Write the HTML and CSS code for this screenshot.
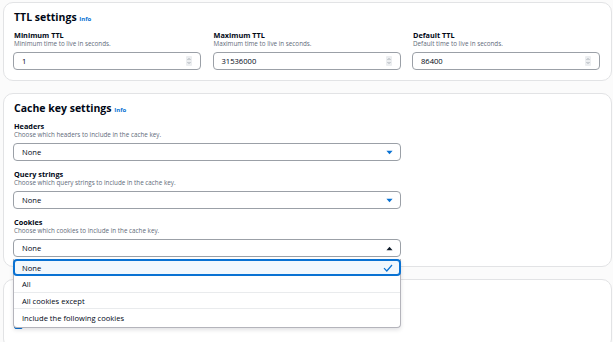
FILE: index.html
```html
<!DOCTYPE html>
<html>
<head>
  <meta name="viewport" content="width=device-width, initial-scale=1.0">
  <link rel="stylesheet" href="styles.css">
</head>
<body>
  <div class="page">
    <section class="card card-ttl">
      <h2 class="card-title">TTL settings <a class="info">Info</a></h2>
      <div class="ttl-grid">
        <div class="field">
          <div class="label">Minimum TTL</div>
          <div class="desc">Minimum time to live in seconds.</div>
          <div class="input">
            <span class="value">1</span>
            <span class="spinner">
              <svg viewBox="0 0 6 10" width="6" height="10"><path d="M1.5 4 L3 2.5 L4.5 4 M1.5 6 L3 7.5 L4.5 6" fill="none" stroke="#8d939c" stroke-width="0.7"/></svg>
            </span>
          </div>
        </div>
        <div class="field">
          <div class="label">Maximum TTL</div>
          <div class="desc">Maximum time to live in seconds.</div>
          <div class="input">
            <span class="value">31536000</span>
            <span class="spinner">
              <svg viewBox="0 0 6 10" width="6" height="10"><path d="M1.5 4 L3 2.5 L4.5 4 M1.5 6 L3 7.5 L4.5 6" fill="none" stroke="#8d939c" stroke-width="0.7"/></svg>
            </span>
          </div>
        </div>
        <div class="field">
          <div class="label">Default TTL</div>
          <div class="desc">Default time to live in seconds.</div>
          <div class="input">
            <span class="value">86400</span>
            <span class="spinner">
              <svg viewBox="0 0 6 10" width="6" height="10"><path d="M1.5 4 L3 2.5 L4.5 4 M1.5 6 L3 7.5 L4.5 6" fill="none" stroke="#8d939c" stroke-width="0.7"/></svg>
            </span>
          </div>
        </div>
      </div>
    </section>

    <section class="card">
      <h2 class="card-title">Cache key settings <a class="info">Info</a></h2>
      <div class="fields">
        <div class="field">
          <div class="label">Headers</div>
          <div class="desc">Choose which headers to include in the cache key.</div>
          <div class="select">
            <span class="value">None</span>
            <svg class="caret" viewBox="0 0 8 5" width="7" height="5"><path d="M0.5 0.5 H7.5 L4 4.5 Z" fill="#0972d3"/></svg>
          </div>
        </div>
        <div class="field">
          <div class="label">Query strings</div>
          <div class="desc">Choose which query strings to include in the cache key.</div>
          <div class="select">
            <span class="value">None</span>
            <svg class="caret" viewBox="0 0 8 5" width="7" height="5"><path d="M0.5 0.5 H7.5 L4 4.5 Z" fill="#0972d3"/></svg>
          </div>
        </div>
        <div class="field">
          <div class="label">Cookies</div>
          <div class="desc">Choose which cookies to include in the cache key.</div>
          <div class="select-wrap">
            <div class="select">
              <span class="value">None</span>
              <svg class="caret" viewBox="0 0 8 5" width="7" height="5"><path d="M0.5 4.5 H7.5 L4 0.5 Z" fill="#0f1b2a"/></svg>
            </div>
            <ul class="dropdown">
              <li class="option selected">
                <span>None</span>
                <svg viewBox="0 0 10 8" width="10" height="8"><path d="M1 4.2 L3.8 7 L9 1" fill="none" stroke="#0972d3" stroke-width="1.2"/></svg>
              </li>
              <li class="option">All</li>
              <li class="option">All cookies except</li>
              <li class="option">Include the following cookies</li>
            </ul>
          </div>
        </div>
      </div>
    </section>

    <section class="card card-last">
      <div class="check-row">
        <span class="checkbox"></span>
      </div>
    </section>
  </div>
</body>
</html>
```

FILE: styles.css
```css
* {
  margin: 0;
  padding: 0;
  box-sizing: border-box;
}

body {
  margin: 0;
  padding: 2px 1px 0 3px;
  background: #fbfbfb;
  font-family: "Open Sans", "Liberation Sans", sans-serif;
  color: #000716;
  overflow: hidden;
}

.page {
  display: flex;
  flex-direction: column;
  gap: 12px;
}

.card {
  background: #fff;
  border: 1px solid #e2e3e5;
  border-radius: 10px;
  padding: 8px 11px 9px 9px;
}

.card-ttl {
  padding-bottom: 10px;
}

.card-title {
  font-size: 10.5px;
  line-height: 13px;
  height: 13px;
  font-weight: 700;
  padding-left: 1px;
  margin-bottom: 7px;
}

.info {
  color: #0972d3;
  font-size: 6px;
  line-height: 1;
  font-weight: 700;
}

.ttl-grid {
  display: grid;
  grid-template-columns: 1fr 1fr 1fr;
  column-gap: 11.5px;
}

.fields {
  display: flex;
  flex-direction: column;
  gap: 9px;
}

.label {
  font-size: 7.3px;
  line-height: 9px;
  font-weight: 700;
  padding-left: 1px;
}

.desc {
  font-size: 6.3px;
  line-height: 8px;
  color: #5f6b7a;
  padding-left: 1px;
}

.input,
.select {
  margin-top: 4px;
  height: 18px;
  border: 1px solid #9ba0a7;
  border-radius: 4px;
  background: #fff;
  display: flex;
  align-items: center;
  justify-content: space-between;
  padding: 0 8px 0 8px;
  font-size: 7.6px;
}

.spinner {
  width: 6px;
  height: 10px;
  background: #eceef0;
  border-radius: 1px;
  display: flex;
}

.select-wrap {
  position: relative;
  max-width: 388px;
}

.select {
  max-width: 388px;
  padding-right: 7px;
}

.dropdown {
  list-style: none;
  position: absolute;
  top: calc(100% + 2px);
  left: 0;
  right: 0;
  background: #fff;
  border: 1px solid #b4b4bb;
  border-top: none;
  border-radius: 0 0 4px 4px;
  box-shadow: 0 2px 4px rgba(0, 7, 22, 0.12);
  font-size: 7.6px;
  z-index: 2;
}

.option {
  height: 16px;
  display: flex;
  align-items: center;
  justify-content: space-between;
  padding: 0 8px;
  border-top: 1px solid #e9ebed;
}

.option.selected {
  height: 17px;
  margin: 0 -1px;
  border: 2px solid #0972d3;
  border-radius: 4px;
  background: #f2f8fd;
  padding: 0 6px 0 7px;
}

.option.selected + .option {
  border-top: none;
}

.option:last-child {
  height: 19px;
}

.card-last {
  height: 70px;
}

.check-row {
  padding-top: 30px;
  padding-left: 1px;
}

.checkbox {
  display: block;
  width: 9px;
  height: 11px;
  border: 1.5px solid #0972d3;
  border-radius: 2px;
  background: #0972d3;
}
```
